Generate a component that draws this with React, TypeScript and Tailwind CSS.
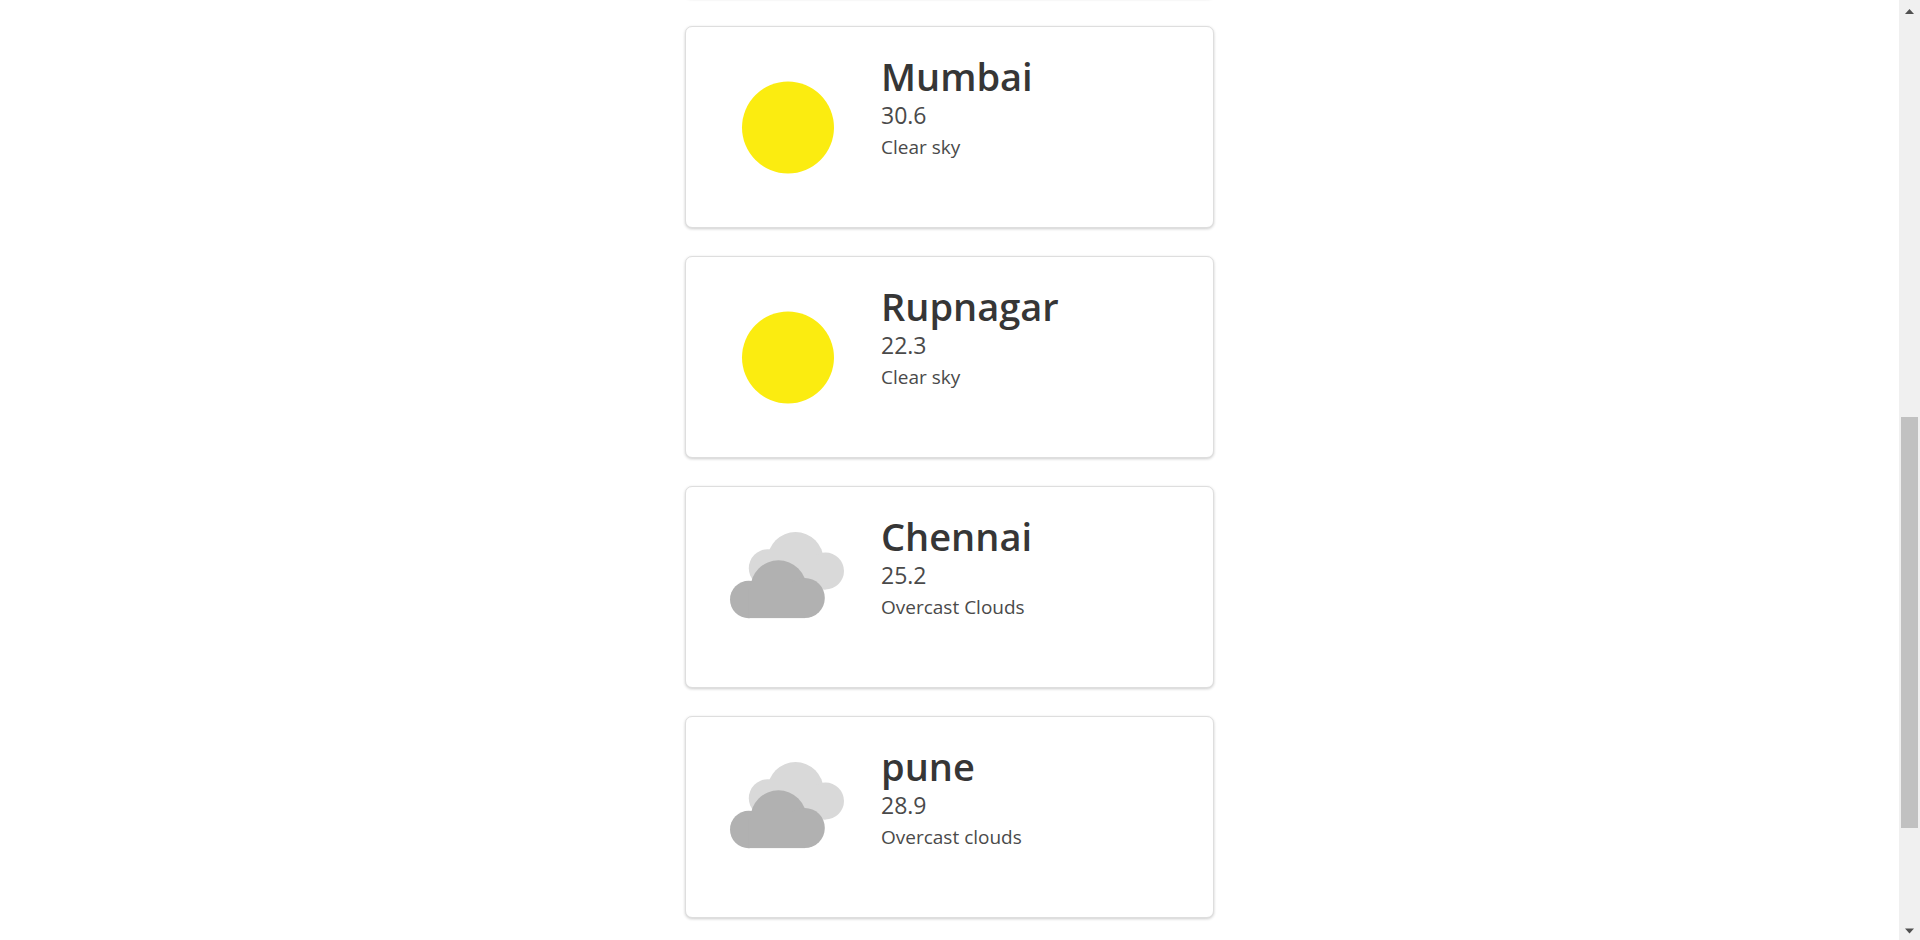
type Sky = 'clear' | 'clouds';

interface CityWeather {
  city: string;
  temperature: string;
  description: string;
  sky: Sky;
}

const cities: CityWeather[] = [
  { city: 'Mumbai', temperature: '30.6', description: 'Clear sky', sky: 'clear' },
  { city: 'Rupnagar', temperature: '22.3', description: 'Clear sky', sky: 'clear' },
  { city: 'Chennai', temperature: '25.2', description: 'Overcast Clouds', sky: 'clouds' },
  { city: 'pune', temperature: '28.9', description: 'Overcast clouds', sky: 'clouds' },
];

function SkyIcon({ sky }: { sky: Sky }) {
  return (
    <svg viewBox="0 0 148 148" className="size-[148px] shrink-0" aria-hidden="true">
      {sky === 'clear' ? (
        <circle cx="76" cy="74.5" r="46" fill="#fbec10" />
      ) : (
        <>
          <g fill="#d9d9d9">
            <circle cx="55.8" cy="55.2" r="19" />
            <circle cx="83.5" cy="47" r="28" />
            <circle cx="113.5" cy="58" r="18.5" />
            <rect x="56" y="50" width="57.5" height="26.5" />
          </g>
          <g fill="#b1b1b1">
            <circle cx="36.7" cy="86.5" r="18.7" />
            <circle cx="66.5" cy="75.3" r="28" />
            <circle cx="92.8" cy="85" r="20" />
            <rect x="36.7" y="76" width="56.3" height="29.1" />
          </g>
        </>
      )}
    </svg>
  );
}

function WeatherCard({ city, temperature, description, sky }: CityWeather) {
  return (
    <article className="flex items-start gap-[21px] rounded-[7px] border border-[#dedede] bg-white p-[26px] shadow-[0_1px_3px_rgba(0,0,0,0.2)]">
      <SkyIcon sky={sky} />
      <div>
        <h2 className="text-[38px] leading-[46px] font-semibold text-[#363636]">{city}</h2>
        <p className="text-[23px] leading-8 text-[#4a4a4a]">{temperature}</p>
        <p className="text-[19px] leading-8 text-[#4a4a4a]">{description}</p>
      </div>
    </article>
  );
}

function ScrollTrack() {
  return (
    <div className="flex w-[21px] shrink-0 flex-col items-center bg-[#f0f0f0] pt-[9px] pb-[6px]" aria-hidden="true">
      <svg width="9" height="6" viewBox="0 0 9 6" fill="#505050">
        <path d="M4.5 0 9 5H0Z" />
      </svg>
      <div className="grow-402" />
      <div className="w-[17px] grow-411 bg-[#c1c1c1]" />
      <div className="grow-100" />
      <svg width="9" height="6" viewBox="0 0 9 6" fill="#505050">
        <path d="M0 0.5H9L4.5 5.5Z" />
      </svg>
    </div>
  );
}

export default function App() {
  return (
    <div className="flex h-screen overflow-hidden bg-white font-['Open_Sans','Noto_Sans',sans-serif]">
      <main className="flex grow justify-center">
        <div className="flex w-full max-w-[529px] flex-col gap-7">
          <div className="-mt-2.5 h-2 shrink-0 rounded-b-md shadow-[0_1px_3px_rgba(0,0,0,0.2)]" />
          {cities.map((item) => (
            <WeatherCard key={item.city} {...item} />
          ))}
        </div>
      </main>
      <ScrollTrack />
    </div>
  );
}
